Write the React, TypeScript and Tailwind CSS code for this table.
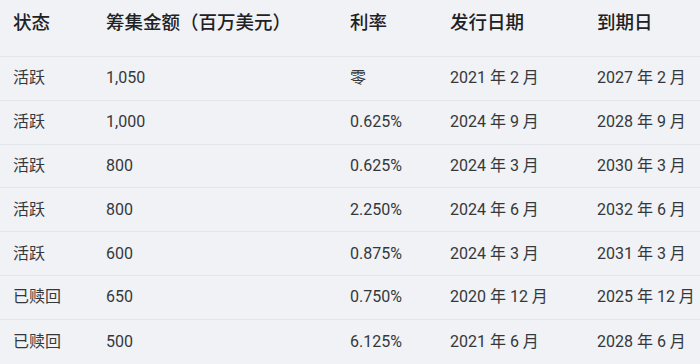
const headers = ["状态", "筹集金额（百万美元）", "利率", "发行日期", "到期日"]

const rows = [
  ["活跃", "1,050", "零", "2021 年 2 月", "2027 年 2 月"],
  ["活跃", "1,000", "0.625%", "2024 年 9 月", "2028 年 9 月"],
  ["活跃", "800", "0.625%", "2024 年 3 月", "2030 年 3 月"],
  ["活跃", "800", "2.250%", "2024 年 6 月", "2032 年 6 月"],
  ["活跃", "600", "0.875%", "2024 年 3 月", "2031 年 3 月"],
  ["已赎回", "650", "0.750%", "2020 年 12 月", "2025 年 12 月"],
  ["已赎回", "500", "6.125%", "2021 年 6 月", "2028 年 6 月"],
]

const cols = "grid grid-cols-[93px_244px_100px_147px_116px]"

export default function App() {
  return (
    <div
      className="w-[700px] h-[364px] overflow-hidden bg-[#f0f2f5]"
      style={{ fontFamily: 'Roboto, "Noto Sans CJK SC", sans-serif' }}
    >
      {/* header */}
      <div className={`${cols} h-[57px] border-b border-[#e2e5e9] text-[18.5px] font-medium text-[#202124]`}>
        {headers.map((h) => (
          <div key={h} className="pl-[13px] pt-[11px] leading-[24px] whitespace-nowrap">
            {h}
          </div>
        ))}
      </div>

      {/* body */}
      {rows.map((r, i) => (
        <div
          key={i}
          className={`${cols} h-[43.8px] items-center text-[16px] text-[#35383b] ${
            i < rows.length - 1 ? "border-b border-[#e2e5e9]" : ""
          }`}
        >
          {r.map((c, j) => (
            <div key={j} className="pl-[13px] whitespace-nowrap">
              {c}
            </div>
          ))}
        </div>
      ))}
    </div>
  )
}
